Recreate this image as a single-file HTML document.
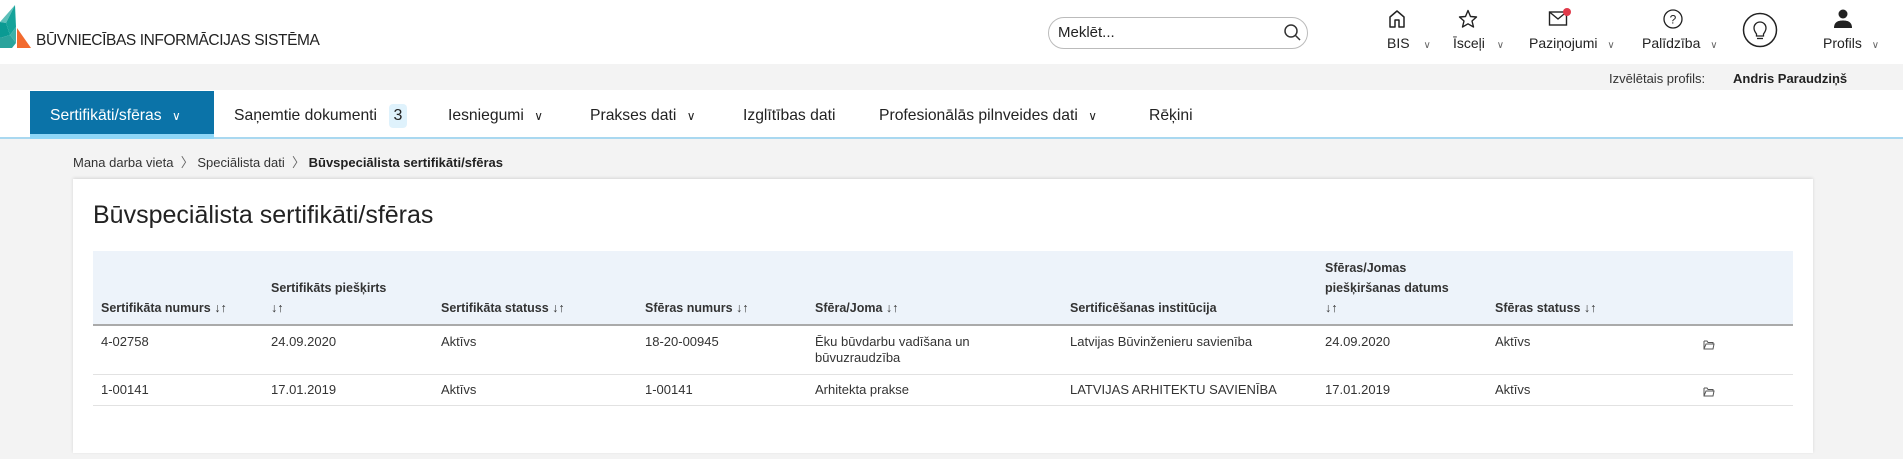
<!DOCTYPE html>
<html><head><meta charset="utf-8"><style>
*{margin:0;padding:0;box-sizing:border-box}
body{width:1903px;height:459px;background:#f3f3f3;font-family:"Liberation Sans",Arial,sans-serif;color:#222;position:relative;overflow:hidden}
.a{position:absolute;white-space:nowrap}
.hdr{left:0;top:0;width:1903px;height:64px;background:#fff}
.nav{left:0;top:90px;width:1903px;height:49px;background:#fff;border-bottom:2px solid #a9d8f0}
.nv{font-size:15.7px;color:#222;top:107px}
.lbl{font-size:14px;top:35px;color:#222}
.chev{font-size:10px;color:#666}
.th{font-size:12.5px;font-weight:bold;color:#333;line-height:20px}
.td{font-size:13px;color:#333;line-height:16px}
</style></head><body>
<div class="a hdr"></div>
<svg class="a" style="left:0;top:5px" width="32" height="44" viewBox="0 0 32 44">
<polygon points="15,0 0,17 6,18" fill="#5cbfb9"/>
<polygon points="0,17 6,18 10,30 0,33" fill="#0a9a93"/>
<polygon points="6,18 15,0 16,22 10,30" fill="#15a39a"/>
<polygon points="0,33 10,30 16,38 12,43 0,43" fill="#2aa39c"/>
<polygon points="10,30 16,22 16,38" fill="#3cb0a8"/>
<polygon points="17,23 31,43 17,43" fill="#f26a2e"/>
</svg>
<div class="a" style="left:36px;top:32px;font-size:15.5px;color:#222;letter-spacing:-0.4px">BŪVNIECĪBAS INFORMĀCIJAS SISTĒMA</div>
<div class="a" style="left:1048px;top:17px;width:260px;height:32px;border:1px solid #bbb;border-radius:16px;background:#fff"></div>
<div class="a" style="left:1058px;top:24px;font-size:15px;color:#222">Meklēt...</div>
<svg class="a" style="left:1283px;top:23px" width="20" height="20" viewBox="0 0 20 20"><circle cx="8" cy="8" r="6" fill="none" stroke="#333" stroke-width="1.5"/><line x1="12.5" y1="12.5" x2="17" y2="17" stroke="#333" stroke-width="1.5"/></svg>
<svg class="a" style="left:1387px;top:9px" width="20" height="20" viewBox="0 0 20 20"><path d="M3 18V8L10 2L17 8V18H12V11H8V18Z" fill="none" stroke="#222" stroke-width="1.5" stroke-linejoin="round"/></svg>
<div class="a lbl" style="left:1387px">BIS <span class="chev" style="margin-left:10px">&#8744;</span></div>
<svg class="a" style="left:1458px;top:9px" width="20" height="20" viewBox="0 0 20 20"><path d="M10 1.5L12.5 7.5L18.5 8L14 12L15.5 18L10 14.8L4.5 18L6 12L1.5 8L7.5 7.5Z" fill="none" stroke="#222" stroke-width="1.4" stroke-linejoin="round"/></svg>
<div class="a lbl" style="left:1453px">Īsceļi <span class="chev" style="margin-left:8px">&#8744;</span></div>
<svg class="a" style="left:1548px;top:8px" width="24" height="20" viewBox="0 0 24 20"><rect x="1.5" y="4" width="17" height="13" fill="none" stroke="#222" stroke-width="1.4"/><path d="M1.5 4L10 11L18.5 4" fill="none" stroke="#222" stroke-width="1.4"/><circle cx="19" cy="4" r="4" fill="#e03a4a"/></svg>
<div class="a lbl" style="left:1529px">Paziņojumi <span class="chev" style="margin-left:6px">&#8744;</span></div>
<svg class="a" style="left:1662px;top:8px" width="22" height="22" viewBox="0 0 22 22"><circle cx="11" cy="11" r="9" fill="none" stroke="#222" stroke-width="1.3"/><text x="11" y="15.5" font-size="12" text-anchor="middle" font-family="Liberation Sans" fill="#222">?</text></svg>
<div class="a lbl" style="left:1642px">Palīdzība <span class="chev" style="margin-left:6px">&#8744;</span></div>
<svg class="a" style="left:1742px;top:12px" width="36" height="36" viewBox="0 0 36 36"><circle cx="18" cy="18" r="16.5" fill="none" stroke="#222" stroke-width="1.5"/><path d="M14.5 22C13 20 12 18.5 12 16A6 6 0 0 1 24 16C24 18.5 23 20 21.5 22V24H14.5Z" fill="none" stroke="#222" stroke-width="1.3"/><line x1="15" y1="26.5" x2="21" y2="26.5" stroke="#222" stroke-width="1.3"/></svg>
<svg class="a" style="left:1832px;top:8px" width="22" height="22" viewBox="0 0 22 22"><circle cx="11" cy="6" r="4.5" fill="#222"/><path d="M2 20C2 14 6 12.5 11 12.5S20 14 20 20Z" fill="#222"/></svg>
<div class="a lbl" style="left:1823px">Profils <span class="chev" style="margin-left:6px">&#8744;</span></div>
<div class="a" style="left:1609px;top:71px;font-size:13px;color:#333">Izvēlētais profils:</div>
<div class="a" style="left:1733px;top:71px;font-size:13px;font-weight:bold;color:#222">Andris Paraudziņš</div>
<div class="a nav"></div>
<div class="a" style="left:30px;top:91px;width:184px;height:48px;background:#0b73a8;border-bottom:5px solid #8ed6f7"></div>
<div class="a nv" style="left:50px;color:#fff">Sertifikāti/sfēras <span style="font-size:12px;margin-left:6px">&#8744;</span></div>
<div class="a nv" style="left:234px">Saņemtie dokumenti</div>
<div class="a" style="left:389px;top:104px;width:18px;height:24px;background:#dff2fc;border-radius:4px;font-size:16px;text-align:center;line-height:24px">3</div>
<div class="a nv" style="left:448px">Iesniegumi <span style="font-size:12px;margin-left:6px">&#8744;</span></div>
<div class="a nv" style="left:590px">Prakses dati <span style="font-size:12px;margin-left:6px">&#8744;</span></div>
<div class="a nv" style="left:743px">Izglītības dati</div>
<div class="a nv" style="left:879px">Profesionālās pilnveides dati <span style="font-size:12px;margin-left:6px">&#8744;</span></div>
<div class="a nv" style="left:1149px">Rēķini</div>
<div class="a" style="left:73px;top:152px;font-size:13px;color:#333">Mana darba vieta &nbsp;<span style="color:#666">&#12297;</span> Speciālista dati &nbsp;<span style="color:#666">&#12297;</span> <b style="color:#222">Būvspeciālista sertifikāti/sfēras</b></div>
<div class="a" style="left:73px;top:179px;width:1740px;height:274px;background:#fff;box-shadow:0 -1px 3px rgba(0,0,0,0.12)"></div>
<div class="a" style="left:93px;top:201px;font-size:25px;color:#222">Būvspeciālista sertifikāti/sfēras</div>
<div class="a" style="left:93px;top:251px;width:1700px;height:75px;background:#edf3fa;border-bottom:2px solid #aaa"></div>
<div class="a" style="left:93px;top:374px;width:1700px;height:1px;background:#e2e2e2"></div>
<div class="a" style="left:93px;top:405px;width:1700px;height:1px;background:#e2e2e2"></div>
<div class="a th" style="left:101px;top:298px">Sertifikāta numurs ↓↑</div>
<div class="a th" style="left:271px;top:278px">Sertifikāts piešķirts<br>↓↑</div>
<div class="a th" style="left:441px;top:298px">Sertifikāta statuss ↓↑</div>
<div class="a th" style="left:645px;top:298px">Sfēras numurs ↓↑</div>
<div class="a th" style="left:815px;top:298px">Sfēra/Joma ↓↑</div>
<div class="a th" style="left:1070px;top:298px">Sertificēšanas institūcija</div>
<div class="a th" style="left:1325px;top:258px">Sfēras/Jomas<br>piešķiršanas datums<br>↓↑</div>
<div class="a th" style="left:1495px;top:298px">Sfēras statuss ↓↑</div>
<div class="a td" style="left:101px;top:334px">4-02758</div>
<div class="a td" style="left:271px;top:334px">24.09.2020</div>
<div class="a td" style="left:441px;top:334px">Aktīvs</div>
<div class="a td" style="left:645px;top:334px">18-20-00945</div>
<div class="a td" style="left:815px;top:334px">Ēku būvdarbu vadīšana un<br>būvuzraudzība</div>
<div class="a td" style="left:1070px;top:334px">Latvijas Būvinženieru savienība</div>
<div class="a td" style="left:1325px;top:334px">24.09.2020</div>
<div class="a td" style="left:1495px;top:334px">Aktīvs</div>
<div class="a td" style="left:101px;top:382px">1-00141</div>
<div class="a td" style="left:271px;top:382px">17.01.2019</div>
<div class="a td" style="left:441px;top:382px">Aktīvs</div>
<div class="a td" style="left:645px;top:382px">1-00141</div>
<div class="a td" style="left:815px;top:382px">Arhitekta prakse</div>
<div class="a td" style="left:1070px;top:382px">LATVIJAS ARHITEKTU SAVIENĪBA</div>
<div class="a td" style="left:1325px;top:382px">17.01.2019</div>
<div class="a td" style="left:1495px;top:382px">Aktīvs</div>
<svg class="a" style="left:1703px;top:340px" width="12" height="10" viewBox="0 0 12 10"><path d="M1 1H4L5 2.5H10V4M1 1V9H10L11 4H3L1 9" fill="none" stroke="#555" stroke-width="1"/></svg>
<svg class="a" style="left:1703px;top:387px" width="12" height="10" viewBox="0 0 12 10"><path d="M1 1H4L5 2.5H10V4M1 1V9H10L11 4H3L1 9" fill="none" stroke="#555" stroke-width="1"/></svg>
</body></html>
